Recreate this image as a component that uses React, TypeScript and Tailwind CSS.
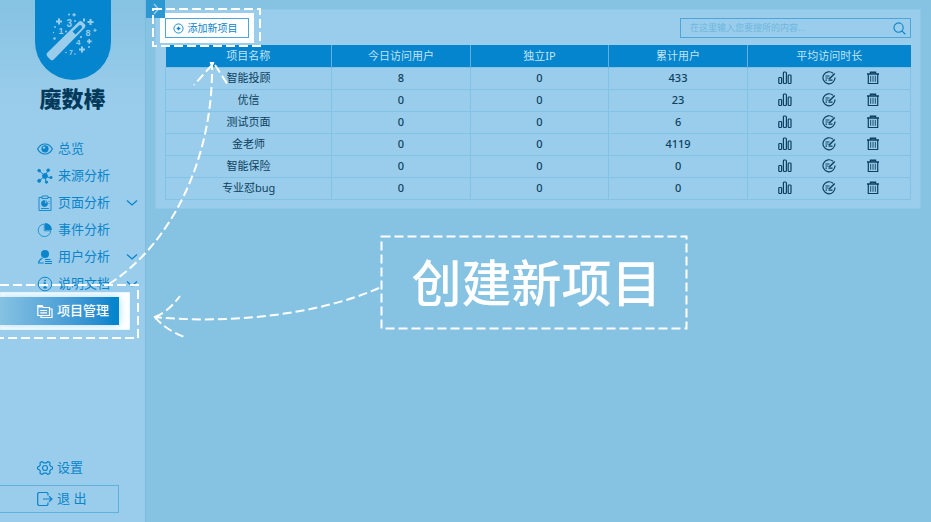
import type { ReactNode } from "react";

const icon = "h-4 w-4 shrink-0";

function EyeIcon() {
  return (
    <svg viewBox="0 0 16 16" className={icon} fill="none" stroke="currentColor" strokeWidth="1.200" aria-hidden="true">
      <path d="M.6 8C2.300 4.800 4.900 3 8 3s5.700 1.800 7.400 5C13.700 11.200 11.100 13 8 13S2.300 11.200.6 8Z" />
      <circle cx="8" cy="7.800" r="3.600" fill="currentColor" stroke="none" />
      <circle cx="7" cy="6.600" r="1.200" fill="#9acdeb" stroke="none" />
    </svg>
  );
}

function NetworkIcon() {
  return (
    <svg viewBox="0 0 16 16" className={icon} fill="currentColor" stroke="currentColor" aria-hidden="true">
      <path d="M8 8 2.500 3M8 8l3-5.500M8 8l5.500 2M8 8l1 6M8 8l-5.500 4.500" fill="none" />
      <circle cx="8" cy="8" r="2.400" />
      <circle cx="2.200" cy="2.600" r="1.300" />
      <circle cx="11.200" cy="2.200" r="1.300" />
      <circle cx="14" cy="9.500" r="1.100" />
      <circle cx="9.500" cy="14.200" r="1.100" />
      <circle cx="2.200" cy="12.800" r="1.500" />
    </svg>
  );
}

function ClipboardIcon() {
  return (
    <svg viewBox="0 0 16 16" className={icon} fill="none" stroke="currentColor" strokeWidth="0.9" aria-hidden="true">
      <path d="M5 2.500H2v13h12v-13h-3M5 1h6v2.500H5z" />
      <path d="M7.500 5.500v3h3a3 3 0 1 1-3-3Z" fill="currentColor" />
      <path d="M9 5.500v1.800h1.800M12 6v1M12 8v1M4 13.500h8" />
    </svg>
  );
}

function PieIcon() {
  return (
    <svg viewBox="0 0 16 16" className={icon} fill="none" stroke="currentColor" strokeWidth="0.8" aria-hidden="true">
      <path d="M7.300 2a6.300 6.300 0 1 0 6.500 6.800H7.300Z" />
      <path d="M8 1v7h7A7 7 0 0 0 8 1Z" fill="currentColor" stroke="none" />
    </svg>
  );
}

function UserIcon() {
  return (
    <svg viewBox="0 0 16 16" className={icon} fill="currentColor" aria-hidden="true">
      <circle cx="8" cy="5" r="4" />
      <path d="M5 8.800C2.500 10 1.200 12 .8 14.500h6v-1H2.300C2.800 11.800 4 10.500 6 9.600ZM8 10h5.500v1H8zM8 12h7v1H8zM8 14h7v1H8z" />
    </svg>
  );
}

function InfoIcon() {
  return (
    <svg viewBox="0 0 16 16" className={icon} fill="none" stroke="currentColor" aria-hidden="true">
      <circle cx="8" cy="8" r="6.800" />
      <path d="M6.500 7H8v4.500M6.300 11.800h3.600" strokeWidth="1.500" />
      <circle cx="8" cy="4.500" r="0.600" fill="currentColor" />
    </svg>
  );
}

function FolderIcon() {
  return (
    <svg viewBox="0 0 16 16" className={icon} fill="none" stroke="currentColor" strokeWidth="1.200" aria-hidden="true">
      <path d="M.8 12.500v-10H5l1.500 2h6v8ZM3.300 7.500H10M3.300 9.800H10M12.500 6H15v8.500H4v-2" />
      <path d="M1 2h4l1.500 2.500H1Z" fill="currentColor" stroke="none" />
    </svg>
  );
}

function GearIcon() {
  return (
    <svg viewBox="0 0 16 16" className={icon} fill="none" stroke="currentColor" strokeWidth="1.200" strokeLinejoin="round" aria-hidden="true">
      <path d="M5 1.500 6.500 2.800h3L11 1.500l2 1.200-.3 2.200 1 1.400 1.700.7v2l-1.700.7-1 1.400.3 2.200-2 1.200-1.500-1.300h-3L5 14.500l-2-1.200.3-2.200-1-1.400L.6 9V7l1.700-.7 1-1.400L3 2.700Z" />
      <circle cx="8" cy="8" r="2.500" />
    </svg>
  );
}

function ExitIcon() {
  return (
    <svg viewBox="0 0 16 16" className={icon} fill="none" stroke="currentColor" strokeWidth="1.200" aria-hidden="true">
      <path d="M11 4.500V2.500l-1-1H1.700l-1 1v11l1 1H10l1-1v-2M6 8h9M12 5.200 15 8l-3 2.800" />
    </svg>
  );
}

function ChevronDown() {
  return (
    <svg viewBox="0 0 12 8" className="ml-auto h-2 w-3" fill="none" stroke="currentColor" strokeWidth="1.300" aria-hidden="true">
      <path d="m1 1.500 5 4.500 5-4.500" />
    </svg>
  );
}

function BarsIcon() {
  return (
    <svg viewBox="0 0 14 14" className="h-[14px] w-[14px]" fill="none" stroke="currentColor" strokeWidth="1.200" aria-hidden="true">
      <rect x="0.800" y="6.500" width="2.800" height="6" rx="0.800" />
      <rect x="5.400" y="1" width="3" height="11.500" rx="1" />
      <rect x="10.200" y="4" width="2.800" height="8.500" rx="0.800" />
    </svg>
  );
}

function EditIcon() {
  return (
    <svg viewBox="0 0 14 14" className="h-[14px] w-[14px]" fill="none" stroke="currentColor" strokeWidth="1.200" aria-hidden="true">
      <path d="M11 2.300A6 6 0 1 0 13 6.500M3.500 5h4M3.500 7h2.300M3.500 9.200h1.500M6.500 9.200h4" />
      <path d="m6.500 7.500 1.200 0 5-5" strokeWidth="1.500" />
    </svg>
  );
}

function TrashIcon() {
  return (
    <svg viewBox="0 0 14 14" className="h-[14px] w-[14px]" fill="none" stroke="currentColor" aria-hidden="true">
      <path d="M1 3h12M4.500 3V1.200h5V3" strokeWidth="1.400" />
      <path d="M2.300 3v9.500h9.400V3" strokeWidth="1.200" />
      <path d="M4.700 4.800v6M7 4.800v6M9.300 4.800v6" strokeWidth="0.900" />
    </svg>
  );
}

function Logo() {
  return (
    <svg viewBox="0 0 76 80" className="h-20 w-[76px]" role="img" aria-label="魔数棒">
      <path d="M0 0h76v42a38 38 0 0 1-76 0Z" fill="#0485cd" />
      <g fill="#9acdeb">
        <path
          fillRule="evenodd"
          d="M12 53 44 21.500q1.500-1 3 0l3 3q1 1.500 0 3L18.500 59.800q-1.500 1-3 0l-3.500-3.800q-1-1.500 0-3ZM37.500 31.600l3 3 6-6.200q1.200-1.500 0-2.700-1.200-1.200-2.800 0Z"
        />
        <g fontFamily="Liberation Sans, sans-serif" fontWeight="700">
          <text x="31.500" y="27" fontSize="10">3</text>
          <text x="23.500" y="34" fontSize="9">1</text>
          <text x="50.500" y="35.500" fontSize="9">8</text>
          <text x="41" y="45" fontSize="8">4</text>
          <text x="34" y="55" fontSize="7">7</text>
        </g>
        <path d="M23 18.500h2v2h2v2h-2v2h-2v-2h-2v-2h2ZM54.500 19h2v2h2v2h-2v2h-2v-2h-2v-2h2ZM38.500 13h1.200v1.200h1.200v1.200h-1.200v1.200h-1.200v-1.200h-1.200v-1.200h1.200ZM53.500 39h1.600v1.600h1.600v1.600h-1.600v1.600h-1.600v-1.600h-1.600v-1.600h1.600ZM46 46.500h2v2h2v2h-2v2h-2v-2h-2v-2h2ZM59.500 28.500h1v1.200h1.200v1h-1.200v1.200h-1v-1.200h-1.200v-1h1.200Z" />
        <circle cx="34" cy="14.500" r="1" />
        <circle cx="20" cy="27" r="0.900" />
        <circle cx="19.500" cy="38.500" r="1.200" />
        <circle cx="18.500" cy="32.500" r="0.700" />
        <circle cx="31" cy="31.500" r="1" />
        <circle cx="40" cy="21" r="0.900" />
        <path d="M48 18.500h2v3h-2z" />
        <circle cx="46" cy="37" r="1.100" />
        <circle cx="54" cy="47" r="0.900" />
        <circle cx="31" cy="52.500" r="0.800" />
        <circle cx="40" cy="54" r="0.800" />
      </g>
    </svg>
  );
}

const nav: { label: string; icon: ReactNode; more?: boolean }[] = [
  { label: "总览", icon: <EyeIcon /> },
  { label: "来源分析", icon: <NetworkIcon /> },
  { label: "页面分析", icon: <ClipboardIcon />, more: true },
  { label: "事件分析", icon: <PieIcon /> },
  { label: "用户分析", icon: <UserIcon />, more: true },
  { label: "说明文档", icon: <InfoIcon />, more: true },
];

const projects = [
  { name: "智能投顾", today: 8, ip: 0, total: 433 },
  { name: "优信", today: 0, ip: 0, total: 23 },
  { name: "测试页面", today: 0, ip: 0, total: 6 },
  { name: "金老师", today: 0, ip: 0, total: 4119 },
  { name: "智能保险", today: 0, ip: 0, total: 0 },
  { name: "专业怼bug", today: 0, ip: 0, total: 0 },
];

const headings = ["项目名称", "今日访问用户", "独立IP", "累计用户", "平均访问时长"];

function Sidebar() {
  return (
    <aside className="flex w-[146px] shrink-0 flex-col border-r border-[#7fbbdc] bg-linear-to-b from-[#86c2e2] via-[#9acdeb] via-20% to-[#9acdeb] text-[13px] text-[#0b84ca]">
      <div className="flex flex-col items-center">
        <Logo />
        <h1 className="mt-[5px] text-[22px] leading-[26px] font-black text-[#033a5c]">魔数棒</h1>
      </div>
      <nav className="mt-6" aria-label="主导航">
        <ul>
          {nav.map((item) => (
            <li key={item.label}>
              <button type="button" className="flex h-[27px] w-full items-center gap-[5px] pr-[7px] pl-[37px]">
                {item.icon}
                {item.label}
                {item.more && <ChevronDown />}
              </button>
            </li>
          ))}
          <li className="relative w-[119px]">
            <span className="absolute -inset-y-[5px] -right-[11px] left-0 bg-white shadow-[inset_0_0_2px_#b5e0f7]" />
            <button
              type="button"
              aria-current="page"
              className="relative flex h-7 w-full items-center gap-1 bg-linear-to-r from-[#86c2e2] to-[#0485cd] to-95% pl-[37px] font-medium text-white shadow-[0_0_8px_#a5dcf8]"
            >
              <FolderIcon />
              项目管理
            </button>
          </li>
        </ul>
      </nav>
      <div className="mt-auto mb-[9px] w-[119px]">
        <button type="button" className="flex h-[34px] items-center gap-1 pl-[37px]">
          <GearIcon />
          设置
        </button>
        <button type="button" className="flex h-7 w-full items-center gap-1 border border-l-0 border-[#5fb0db] pl-[37px] whitespace-pre">
          <ExitIcon />
          退 出
        </button>
      </div>
    </aside>
  );
}

function ProjectTable() {
  return (
    <table className="mt-[7px] w-full table-fixed border-collapse text-center text-[11px] leading-4 text-[#0d3f60]">
      <colgroup>
        <col className="w-[22.3%]" />
        <col className="w-[18.6%]" />
        <col className="w-[18.6%]" />
        <col className="w-[18.6%]" />
        <col />
      </colgroup>
      <thead>
        <tr className="h-[22px] bg-[#0485cd] text-[#c2e4f5]">
          {headings.map((h) => (
            <th key={h} scope="col" className="border-r border-[#5fb0db] p-0 font-normal last:border-r-0">
              {h}
            </th>
          ))}
        </tr>
      </thead>
      <tbody>
        {projects.map((p) => (
          <tr key={p.name} className="h-[22px]">
            <td className="border border-[#82c3e5] p-0">{p.name}</td>
            <td className="border border-[#82c3e5] p-0 font-medium">{p.today}</td>
            <td className="border border-[#82c3e5] p-0 font-medium">{p.ip}</td>
            <td className="border border-[#82c3e5] p-0 font-medium">{p.total}</td>
            <td className="border border-[#82c3e5] p-0">
              <div className="flex items-center justify-center gap-[30px]">
                <button type="button" aria-label={`${p.name} 统计`}>
                  <BarsIcon />
                </button>
                <button type="button" aria-label={`${p.name} 编辑`}>
                  <EditIcon />
                </button>
                <button type="button" aria-label={`${p.name} 删除`}>
                  <TrashIcon />
                </button>
              </div>
            </td>
          </tr>
        ))}
      </tbody>
    </table>
  );
}

function Guide() {
  return (
    <div className="pointer-events-none absolute inset-0 overflow-hidden">
      <svg className="absolute top-0 left-0 h-[522px] w-[931px]" fill="none" stroke="#fff" strokeWidth="2" strokeDasharray="9 4" aria-hidden="true">
        <rect x="153" y="9" width="107" height="37" />
        <path d="M0 285h138v53H0" />
        <rect x="381.500" y="236.500" width="305" height="92" />
        <path d="M109 284C170 245 214 160 212 62" />
        <path d="m212 65-18 20M215 65l13 20" />
        <path d="M379 288C315 316 225 324 155 317" />
        <path d="M155 317q13-5 25-21M155 317q10 13 32 21" />
        <path d="M154 316.500h5l-3 3zM210 62.500h4l-2 4z" fill="#fff" strokeWidth="1" strokeDasharray="none" />
      </svg>
      <p className="absolute top-[236px] left-[381px] flex h-[93px] w-[307px] items-center justify-center pl-1 text-[50px] leading-none font-medium text-white">
        创建新项目
      </p>
    </div>
  );
}

export default function App() {
  return (
    <div className="relative flex min-h-screen bg-[#86c2e2] font-['Noto_Sans','Noto_Sans_CJK_SC',sans-serif]">
      <Sidebar />
      <main className="relative min-w-0 flex-1 py-[9px] pr-[10px] pl-[9px]">
        <button type="button" aria-label="展开" className="absolute top-0 left-0 flex h-[18px] w-[19px] items-center justify-center bg-[#2b98d2] text-[#9acdeb]">
          <svg viewBox="0 0 8 12" className="h-3 w-2" fill="none" stroke="currentColor" strokeWidth="1.300" aria-hidden="true">
            <path d="m2 1 4.500 5L2 11" />
          </svg>
        </button>
        <section className="border border-[#90c8e7] bg-[#9acdeb] px-[9px] pt-2 pb-2">
          <div className="flex items-center justify-between">
            <button type="button" className="flex h-5 w-[84px] items-center justify-center gap-1 border border-[#4ba7d9] bg-white pr-1 text-[10px] text-[#0b84ca] shadow-[0_0_0_5px_#fff]">
              <svg viewBox="0 0 12 12" className="h-[11px] w-[11px]" fill="none" stroke="currentColor" aria-hidden="true">
                <circle cx="6" cy="6" r="5" />
                <path d="M6 4v4M4 6h4" strokeWidth="1.500" />
              </svg>
              添加新项目
            </button>
            <form className="flex h-5 w-[231px] items-center border border-[#4ba7d9] pr-1 pl-[9px]" onSubmit={(e) => e.preventDefault()}>
              <input
                type="search"
                aria-label="搜索"
                placeholder="在这里输入您要搜所的内容..."
                className="min-w-0 flex-1 bg-transparent text-[9px] text-[#0d3f60] outline-none placeholder:text-[#6db7df]"
              />
              <button type="submit" aria-label="搜索" className="text-[#0b84ca]">
                <svg viewBox="0 0 14 14" className="h-[13px] w-[13px]" fill="none" stroke="currentColor" strokeWidth="1.200" aria-hidden="true">
                  <circle cx="6" cy="6" r="5" />
                  <path d="m9.600 9.600 3.600 3.600" />
                </svg>
              </button>
            </form>
          </div>
          <ProjectTable />
        </section>
      </main>
      <Guide />
    </div>
  );
}
